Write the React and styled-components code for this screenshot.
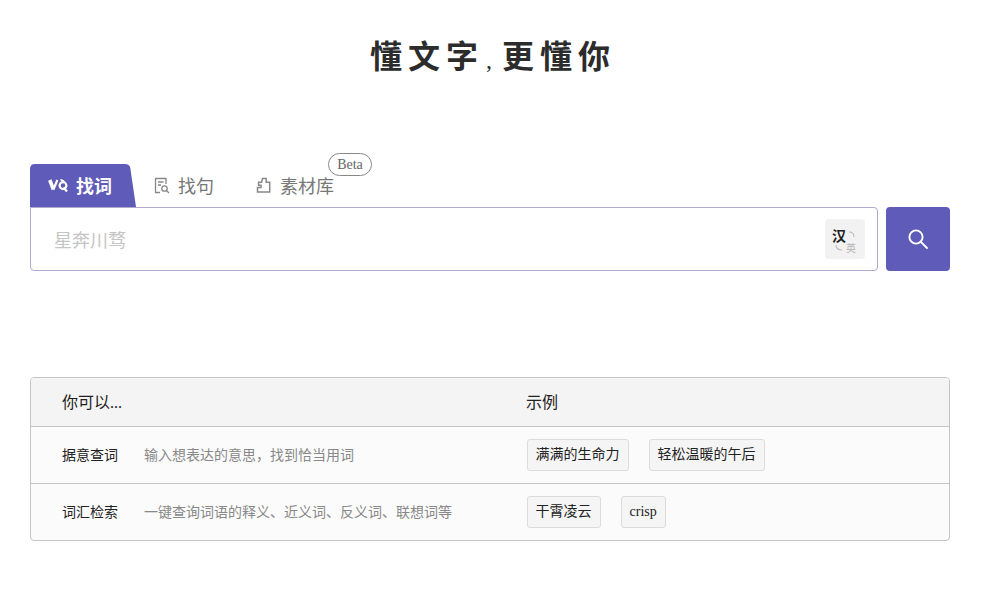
import React from 'react';
import styled, { createGlobalStyle } from 'styled-components';

const Global = createGlobalStyle`
  html, body { margin: 0; padding: 0; background: #fff; }
  body { font-family: "Liberation Serif", "Noto Sans CJK SC", serif; color: #222; }
`;

const Page = styled.div`
  width: 980px;
  height: 593px;
  box-sizing: border-box;
  padding: 0 30px;
  overflow: hidden;
`;

const Title = styled.h1`
  margin: 0;
  padding: 34px 0 0 6px;
  height: 164px;
  box-sizing: border-box;
  text-align: center;
  font-family: "Liberation Serif", "Noto Sans CJK SC", sans-serif;
  font-size: 32px;
  line-height: 46px;
  font-weight: 700;
  letter-spacing: 6px;
  color: #2c2c2c;
`;

const TitleComma = styled.span`
  font-size: 24px;
  font-weight: 400;
  letter-spacing: 10px;
  margin-left: 2px;
`;

const Tabs = styled.div`
  display: flex;
  height: 43px;
  position: relative;
`;

const ActiveTab = styled.div`
  width: 106px;
  height: 43px;
  background: #5f5bb8;
  clip-path: path('M0 43 V5 Q0 0 5 0 H95 Q99.5 0 100.3 4 L106 43 Z');
  display: flex;
  align-items: center;
  padding: 0 0 1px 18px;
  box-sizing: border-box;
  gap: 7px;
  color: #fff;
  font-size: 18px;
  font-weight: 700;
`;

const Tab = styled.div`
  display: flex;
  align-items: center;
  gap: ${p => p.$iconGap}px;
  color: #777;
  font-size: 18px;
  padding-bottom: 1px;
  margin-left: ${p => p.$gap}px;
`;

const Beta = styled.span`
  position: absolute;
  left: 298px;
  top: -11px;
  width: 44px;
  height: 23px;
  box-sizing: border-box;
  border: 1px solid #888;
  border-radius: 12px;
  background: #fff;
  font-size: 14px;
  line-height: 21px;
  color: #666;
  text-align: center;
`;

const SearchRow = styled.div`
  display: flex;
  gap: 8px;
  height: 64px;
`;

const SearchBox = styled.div`
  flex: 1;
  box-sizing: border-box;
  border: 1px solid #aeaad0;
  border-radius: 0 4px 4px 4px;
  display: flex;
  align-items: center;
  justify-content: space-between;
  padding: 0 12px 0 23px;
`;

const Placeholder = styled.span`
  font-size: 18px;
  color: #c4c4c4;
`;

const LangToggle = styled.div`
  width: 40px;
  height: 40px;
  border-radius: 4px;
  background: #f2f2f2;
  position: relative;
  font-family: "Noto Sans CJK SC", sans-serif;
`;

const LangMain = styled.span`
  position: absolute;
  left: 7px;
  top: 7px;
  font-size: 14px;
  line-height: 18px;
  font-weight: 700;
  color: #222;
`;

const LangSub = styled.span`
  position: absolute;
  left: 21px;
  top: 23px;
  font-size: 10px;
  line-height: 12px;
  color: #b4b4b4;
`;

const LangArcs = styled.svg`
  position: absolute;
  left: 0;
  top: 0;
`;

const SearchButton = styled.button`
  width: 64px;
  height: 64px;
  border: 0;
  padding: 0;
  border-radius: 4px;
  background: #5f5bb8;
  display: flex;
  align-items: center;
  justify-content: center;
`;

const Table = styled.div`
  margin-top: 106px;
  border: 1px solid #c4c4c4;
  border-radius: 4px;
  overflow: hidden;
  background: #fbfbfb;
`;

const Row = styled.div`
  display: grid;
  grid-template-columns: 495px 1fr;
  height: ${p => (p.$head ? 49 : p.$last ? 56 : 57)}px;
  box-sizing: border-box;
  align-items: center;
  background: ${p => (p.$head ? '#f4f4f4' : 'transparent')};
  border-bottom: ${p => (p.$last ? '0' : '1px solid #c4c4c4')};
`;

const HeadCell = styled.div`
  font-size: 16px;
  color: #222;
  padding-left: ${p => p.$pad}px;
  padding-bottom: 2px;
`;

const Feature = styled.div`
  display: flex;
  align-items: center;
  padding: 0 0 2px 31px;
`;

const FeatureName = styled.span`
  width: 82px;
  font-size: 14px;
  color: #222;
`;

const FeatureDesc = styled.span`
  font-size: 14px;
  color: #888;
`;

const Examples = styled.div`
  display: flex;
  gap: 20px;
  padding-left: 1px;
`;

const Chip = styled.span`
  box-sizing: border-box;
  height: 32px;
  line-height: 30px;
  padding: 0 8.5px 0 7.5px;
  font-size: 14px;
  color: #222;
  background: #f5f5f5;
  border: 1px solid #dcdcdc;
  border-radius: 3px;
`;

const WqIcon = () => (
  <svg width="21" height="13" viewBox="0 0 21 13" fill="none" stroke="#fff">
    <path d="M1.8 1 L5.4 10.5" strokeWidth="3.6" />
    <path d="M5.4 10.5 L9.4 1" strokeWidth="2.2" />
    <circle cx="15" cy="6.6" r="3.4" strokeWidth="2.2" />
    <path d="M15.5 8.5 L19 12.5" strokeWidth="2.2" />
    <path d="M12.5 0.6 L16 2.2" strokeWidth="1.7" />
  </svg>
);

const SentenceIcon = () => (
  <svg width="16" height="17" viewBox="0 0 16 17" fill="none" stroke="#888" strokeWidth="1.3">
    <path d="M6 15.5 H1.5 V1.5 H12 V7" />
    <path d="M4 5 H9.5 M4 8 H7" />
    <circle cx="10.5" cy="11.5" r="2.7" />
    <path d="M12.5 13.5 L15 16" />
  </svg>
);

const PuzzleIcon = () => (
  <svg width="15" height="16" viewBox="0 0 15 16" fill="none" stroke="#888" strokeWidth="1.5">
    <path d="M1.5 15 H13.7 V5.2 H10.2 V1.4 H6.6 L5.6 5.2 H2.6 V8.2 H5 V10.6 H1.5 Z" />
  </svg>
);

const SearchIcon = () => (
  <svg width="22" height="22" viewBox="0 0 22 22" fill="none" stroke="#fff" strokeWidth="1.9">
    <circle cx="9" cy="9" r="6.6" />
    <path d="M13.8 13.8 L20 20" strokeLinecap="round" />
  </svg>
);

export default function App() {
  return (
    <Page>
      <Global />
      <Title>懂文字<TitleComma>,</TitleComma>更懂你</Title>
      <Tabs>
        <ActiveTab><WqIcon />找词</ActiveTab>
        <Tab $gap={18} $iconGap={8}><SentenceIcon />找句</Tab>
        <Tab $gap={42} $iconGap={9}><PuzzleIcon />素材库</Tab>
        <Beta>Beta</Beta>
      </Tabs>
      <SearchRow>
        <SearchBox>
          <Placeholder>星奔川骛</Placeholder>
          <LangToggle>
            <LangMain>汉</LangMain>
            <LangSub>英</LangSub>
            <LangArcs width="40" height="40" viewBox="0 0 40 40" fill="none" stroke="#bdbdbd" strokeWidth="1.2">
              <path d="M24 13 C27 13 29 15 29 18" />
              <path d="M11 26 C11 29 13 31 17 31" />
            </LangArcs>
          </LangToggle>
        </SearchBox>
        <SearchButton aria-label="搜索"><SearchIcon /></SearchButton>
      </SearchRow>
      <Table>
        <Row $head>
          <HeadCell $pad={31}>你可以...</HeadCell>
          <HeadCell $pad={0}>示例</HeadCell>
        </Row>
        <Row>
          <Feature>
            <FeatureName>据意查词</FeatureName>
            <FeatureDesc>{'输入想表达的意思\uFF0C找到恰当用词'}</FeatureDesc>
          </Feature>
          <Examples>
            <Chip>满满的生命力</Chip>
            <Chip>轻松温暖的午后</Chip>
          </Examples>
        </Row>
        <Row $last>
          <Feature>
            <FeatureName>词汇检索</FeatureName>
            <FeatureDesc>一键查询词语的释义、近义词、反义词、联想词等</FeatureDesc>
          </Feature>
          <Examples>
            <Chip>干霄凌云</Chip>
            <Chip>crisp</Chip>
          </Examples>
        </Row>
      </Table>
    </Page>
  );
}
